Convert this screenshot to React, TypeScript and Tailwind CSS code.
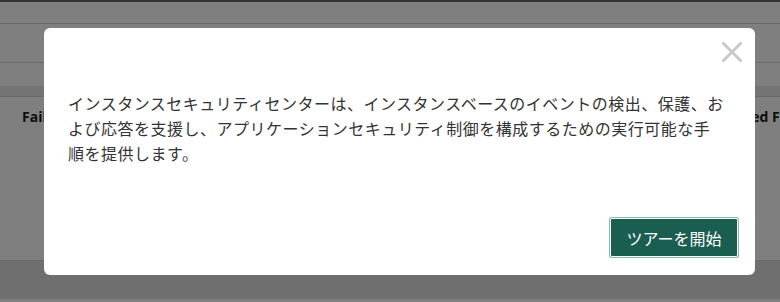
import React from "react";

export default function App() {
  return (
    <div className="relative w-[780px] h-[302px] overflow-hidden bg-white font-['Open_Sans',sans-serif]">
      {/* underlying page */}
      <div className="h-[2px] bg-[#6a6a6a]" />
      <div className="h-[22px] border-b border-[#d4d4d4]" />
      <div className="h-[39px] border-b border-[#d4d4d4]" />
      <div className="h-[23px]" />
      <div className="h-[11px] bg-[#e8e8e8] border-b border-[#d4d4d4]" />
      <div className="h-[163px] flex pt-[10px] text-[14px] leading-[20px] font-bold text-[#1a1a1a]">
        <div className="pl-[22px] w-[713px] shrink-0 whitespace-nowrap">Failed Logins</div>
        <div className="whitespace-nowrap">Blocked Files</div>
      </div>
      <div className="h-[39px] border-t border-[#d4d4d4] bg-[#dfdfdf]" />

      {/* backdrop */}
      <div className="absolute inset-0 bg-black/50" />

      {/* modal */}
      <div className="absolute left-[44px] top-[28px] w-[711px] h-[247px] rounded-[6px] bg-white flex flex-col font-['Noto_Sans_CJK_JP','Noto_Sans',sans-serif]">
        <div className="flex justify-end pt-[13px] pr-[12px]">
          <svg width="22" height="22" viewBox="0 0 22 22" aria-label="閉じる">
            <path d="M1.5 1.5 L20.5 20.5 M20.5 1.5 L1.5 20.5" stroke="#c9c9c9" strokeWidth="3" fill="none" />
          </svg>
        </div>
        <p className="mt-[28px] px-[24px] text-[16px] leading-[25px] text-[#333333] tracking-[0.5px] whitespace-nowrap">
          インスタンスセキュリティセンターは、インスタンスベースのイベントの検出、保護、お
          <br />
          よび応答を支援し、アプリケーションセキュリティ制御を構成するための実行可能な手
          <br />
          順を提供します。
        </p>
        <div className="flex-1" />
        <div className="flex justify-end pr-[17px] pb-[18px]">
          <button className="w-[128px] h-[39px] bg-[#1a5e51] border border-white ring-1 ring-[#7fbcae] text-white text-[16px] leading-none rounded-[2px]">
            ツアーを開始
          </button>
        </div>
      </div>
    </div>
  );
}
